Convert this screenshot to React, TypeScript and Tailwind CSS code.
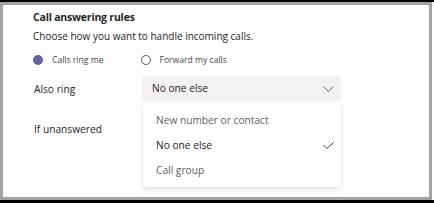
const OPTIONS = [
  { label: "New number or contact", selected: false },
  { label: "No one else", selected: true },
  { label: "Call group", selected: false },
];

function Chevron() {
  return (
    <svg width="11" height="6" viewBox="0 0 11 6" className="text-[#605e5c]">
      <polyline points="0.5,0.5 5.5,5.5 10.5,0.5" fill="none" stroke="currentColor" strokeWidth="0.9" />
    </svg>
  );
}

function CheckMark() {
  return (
    <svg width="11" height="7" viewBox="0 0 11 7" className="text-[#252423]">
      <polyline points="0.5,3 4,6.5 10.5,0.5" fill="none" stroke="currentColor" strokeWidth="0.9" />
    </svg>
  );
}

export default function App() {
  return (
    <div
      className="h-[203px] w-[434px] overflow-hidden border-t-2 border-b-[3px] border-black bg-white"
      style={{ fontFamily: '"Open Sans", "Noto Sans", sans-serif' }}
    >
      <div className="relative h-full w-[432px] border-[3px] border-[#a3a3a3] bg-white pl-[30px] text-[#252423]">
        <h1 className="pt-[5px] text-[10.5px] font-bold leading-[14px] tracking-[-0.2px]">Call answering rules</h1>
        <p className="mt-[5px] text-[10px] leading-[14px]">Choose how you want to handle incoming calls.</p>

        <div className="mt-[10px] flex h-[14px] items-center text-[8.6px] text-[#484644]">
          <span className="h-[10px] w-[10px] rounded-full bg-[#6264a7]" />
          <span className="ml-[9px]">Calls ring me</span>
          <span className="ml-[37px] h-[10px] w-[10px] rounded-full border border-[#605e5c]" />
          <span className="ml-[9px]">Forward my calls</span>
        </div>

        <div className="mt-[9px] flex items-center">
          <span className="w-[109px] pl-[1px] text-[10.2px] leading-[16px]">Also ring</span>
          <div className="flex h-[25px] w-[199px] items-center justify-between rounded-[2px] bg-[#f3f2f1] pl-[10px] pr-[7px] text-[10.2px]">
            <span>No one else</span>
            <Chevron />
          </div>
        </div>

        <div className="mt-[20px] pl-[1px] text-[10.2px] leading-[16px]">If unanswered</div>

        <div className="absolute left-[140px] top-[98px] w-[198px] rounded-[2px] bg-white pt-[5px] pb-[4px] shadow-[0_2px_5px_rgba(0,0,0,0.14)]">
          {OPTIONS.map((o) => (
            <div
              key={o.label}
              className={
                "flex h-[25px] items-center justify-between pl-[13px] pr-[7px] text-[10.2px] " +
                (o.selected ? "text-[#252423]" : "text-[#605e5c]")
              }
            >
              <span>{o.label}</span>
              {o.selected && <CheckMark />}
            </div>
          ))}
        </div>
      </div>
    </div>
  );
}
